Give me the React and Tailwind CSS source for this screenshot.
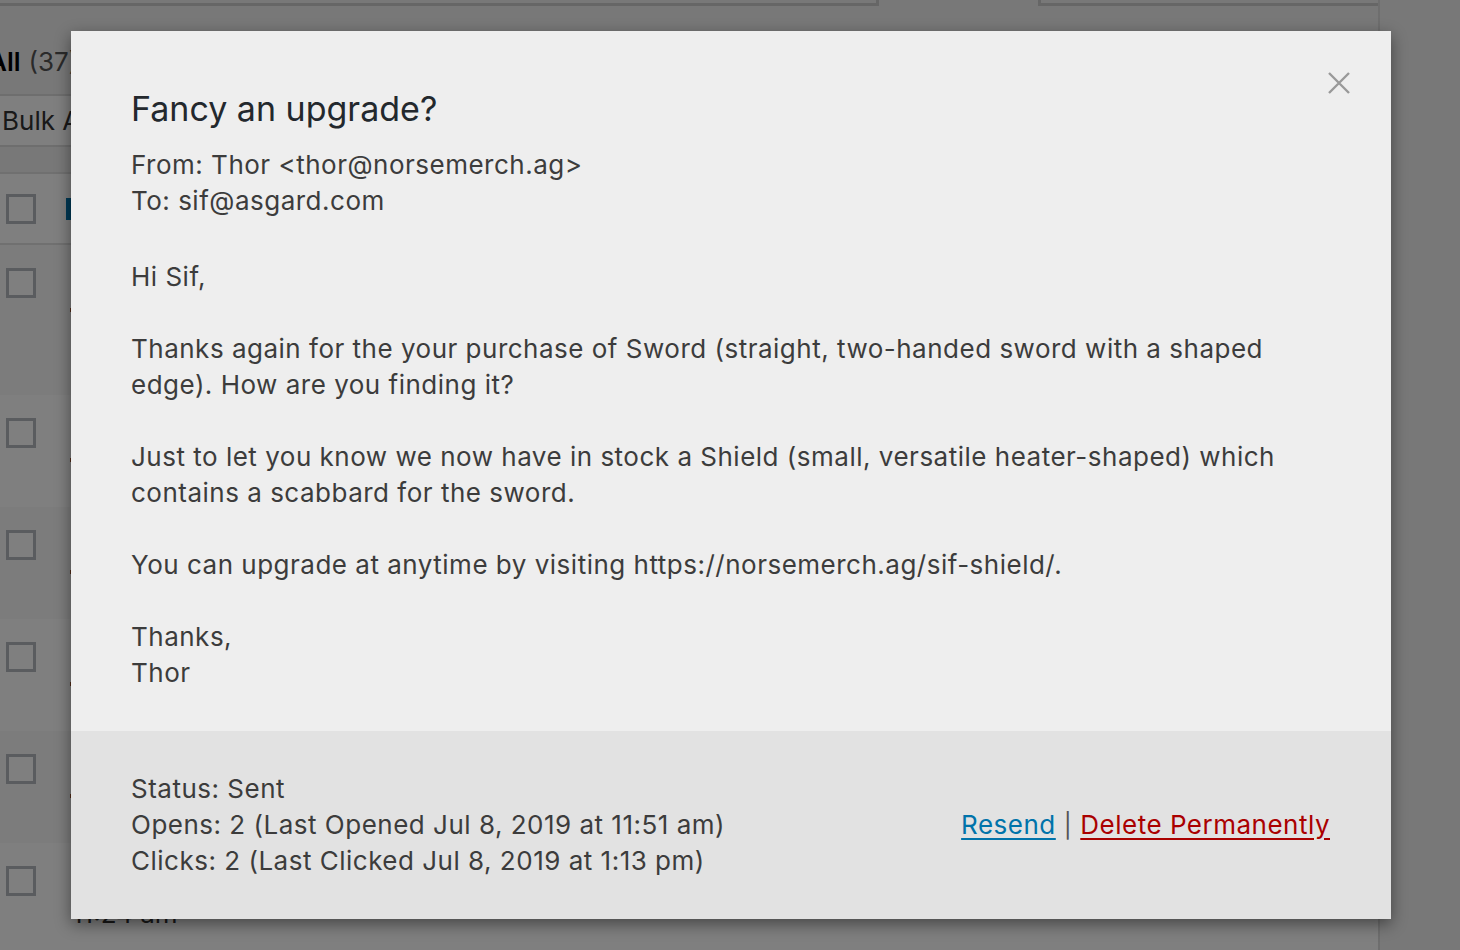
import React from "react";

const font = { fontFamily: "Inter, 'Noto Sans', sans-serif" };

function Checkbox() {
  return <div className="w-[30px] h-[30px] shrink-0 border-[3px] border-[#b4b9be] bg-white" />;
}

function Row({ striped, tall }) {
  return (
    <div className={`flex shrink-0 items-start pl-[6px] pt-[23px] ${tall ? "h-[150px]" : "h-[112px]"} ${striped ? "bg-[#f9f9f9]" : "bg-white"}`}>
      <Checkbox />
      <div className="ml-[34px] mt-[40px] w-[6px] h-[4px] bg-[#a0522d]" />
    </div>
  );
}

export default function App() {
  return (
    <div className="relative w-[1460px] h-[950px] overflow-hidden bg-[#f1f1f1]" style={font}>
      {/* background page */}
      <div className="flex w-[1380px] h-full border-r-2 border-[#ddd]">
        <div className="flex flex-col w-full">
          <div className="flex h-[6px] shrink-0">
            <div className="w-[880px] border-b-[3px] border-r-[3px] border-[#ccc]" />
            <div className="w-[160px]" />
            <div className="w-[340px] border-b-[3px] border-l-[3px] border-[#ccc]" />
          </div>
          <div className="h-[88px] shrink-0 pt-[38px] text-[26px] leading-[36px] text-[#555] -ml-[12px]">
            <span className="font-semibold text-black">All</span>
            <span className="ml-[8px]">(37)</span>
          </div>
          <div className="h-[53px] shrink-0 flex items-center text-[26px] text-[#333] border-y-2 border-[#ddd] bg-white pl-[2px]">
            Bulk Actions
          </div>
          <div className="h-[25px] shrink-0" />
          <div className="h-[73px] shrink-0 flex items-center pl-[6px] bg-white border-y-2 border-[#e1e1e1]">
            <Checkbox />
            <div className="ml-[30px] w-[8px] h-[22px] bg-[#0073aa]" />
          </div>
          <Row tall striped />
          <Row />
          <Row striped />
          <Row />
          <Row striped />
          <div className="flex shrink-0 flex-col pl-[6px] bg-white h-[200px] pt-[23px]">
            <Checkbox />
            <div className="ml-[66px] mt-[-2px] text-[26px] text-[#333]">11:24 am</div>
          </div>
        </div>
      </div>

      {/* overlay */}
      <div className="absolute inset-0 bg-black/50" />

      {/* modal */}
      <div className="absolute left-[71px] top-[31px] w-[1320px] bg-[#eeeeee] shadow-[0_5px_15px_rgba(0,0,0,0.45)]">
        <div className="relative px-[60px] pt-[55px] pb-[40px] text-[#3c3c3c] text-[26px] leading-[36px] tracking-[0.5px]">
          <button className="absolute right-[40px] top-[40px] w-[24px] h-[24px]" aria-label="Close">
            <svg viewBox="0 0 24 24" width="24" height="24">
              <path d="M2 2 L22 22 M22 2 L2 22" stroke="#999" strokeWidth="2.4" fill="none" />
            </svg>
          </button>
          <h1 className="text-[34px] leading-[46px] text-[#23282d] font-normal tracking-normal">Fancy an upgrade?</h1>
          <div className="mt-[15px]">
            <div>From: Thor &lt;thor@norsemerch.ag&gt;</div>
            <div>To: sif@asgard.com</div>
          </div>
          <div className="mt-[40px] flex flex-col gap-[36px]">
            <p>Hi Sif,</p>
            <p>Thanks again for the your purchase of Sword (straight, two-handed sword with a shaped edge). How are you finding it?</p>
            <p>Just to let you know we now have in stock a Shield (small, versatile heater-shaped) which contains a scabbard for the sword.</p>
            <p>You can upgrade at anytime by visiting https://norsemerch.ag/sif-shield/.</p>
            <p>Thanks,<br />Thor</p>
          </div>
        </div>
        <div className="flex items-center justify-between bg-[#e2e2e2] px-[60px] py-[40px] text-[#3c3c3c] text-[26px] leading-[36px] tracking-[0.5px]">
          <div>
            <div>Status: Sent</div>
            <div>Opens: 2 (Last Opened Jul 8, 2019 at 11:51 am)</div>
            <div>Clicks: 2 (Last Clicked Jul 8, 2019 at 1:13 pm)</div>
          </div>
          <div className="mr-[1px]">
            <a href="#" className="text-[#0073aa] underline underline-offset-[4px]">Resend</a>
            <span className="mx-[8px] text-[#555] text-[24px]">|</span>
            <a href="#" className="text-[#a00] underline underline-offset-[4px]">Delete Permanently</a>
          </div>
        </div>
      </div>
    </div>
  );
}
